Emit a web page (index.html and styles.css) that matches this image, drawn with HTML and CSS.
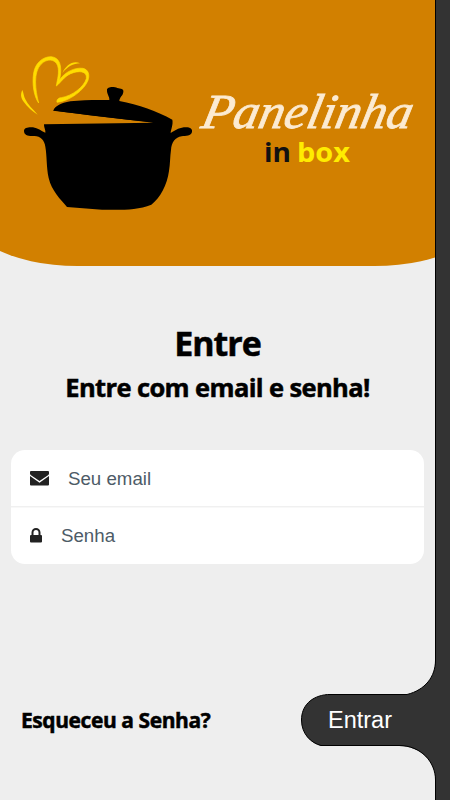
FILE: index.html
```html
<!DOCTYPE html>
<html lang="pt-BR">
<head>
  <meta charset="UTF-8" />
  <title>Panelinha in box</title>
  <meta name="viewport" content="width=device-width, initial-scale=1" />
  <link rel="stylesheet" href="styles.css">
</head>
<body>
  <div class="screen">
    <header>
      <svg class="pot" viewBox="0 0 600 540" aria-hidden="true">
        <path d="M132 253L460 248L160 212C164 199 182 189 211 184C249 179 295 180 328 180C329 170 320 162 321 150C320 139 343 139 352 144C362 147 372 146 370 156C369 167 359 171 358 183C416 193 471 214 517 239C520 254 513 267 512 279C528 269 540 262 558 262C571 262 578 268 576 276C574 288 557 287 545 289C526 292 514 307 513 330C510 349 511 371 507 393C501 435 481 473 454 494C410 511 362 510 306 509L201 501C182 478 155 453 146 414C139 381 141 348 136 320C134 300 119 286 100 288C86 289 72 286 72 273C72 263 85 261 99 262C114 264 123 273 136 278C137 269 132 265 132 253Z"/>
        <path d="M158 211C250 224 360 238 462 247L430 225L250 195Z"/>
        <g fill="#ffdc00">
          <path d="M116 189C101 168 96 129 101 99C105 71 127 50 153 50C181 52 187 81 179 119C197 94 226 82 248 85C265 88 270 104 264 121C254 149 209 184 171 187C169 179 176 173 184 173C217 167 251 142 259 116C263 92 235 91 212 101C191 111 184 126 169 138C172 118 179 98 173 77C166 57 141 54 123 73C99 97 106 151 116 189Z" stroke="#ffdc00" stroke-width="2"/>
          <path d="M67 150C61 163 62 173 71 185C82 201 97 214 113 224C98 207 84 195 76 178C71 168 71 159 67 150Z"/>
          <path d="M187 99C197 76 220 60 240 70C220 70 201 81 187 99Z"/>
        </g>
      </svg>
      <svg class="brand" viewBox="0 0 240 100">
        <text class="brand-name" x="20" y="48" textLength="210" lengthAdjust="spacingAndGlyphs" transform="skewX(-12)">Panelinha</text>
        <text class="brand-in" x="74" y="82" textLength="27" lengthAdjust="spacingAndGlyphs">in</text>
        <text class="brand-box" x="107" y="82" textLength="53" lengthAdjust="spacingAndGlyphs">box</text>
      </svg>
    </header>

    <main>
      <h1>Entre</h1>
      <h2>Entre com email e senha!</h2>
      <form class="fields">
        <label class="field">
          <svg width="19" height="15" viewBox="0 0 19 15">
            <path d="M1 0H18Q19 0 19 1V2.500Q19 3.500 18 4.200L9.500 10L1 4.200Q0 3.500 0 2.500V1Q0 0 1 0ZM0 5L9.500 11.700L19 5V13.500Q19 14.500 18 14.500H1Q0 14.500 0 13.500Z"/>
          </svg>
          <input type="email" placeholder="Seu email" />
        </label>
        <label class="field">
          <svg width="12" height="15" viewBox="0 0 12 15">
            <path d="M1.500 7V4.500A4.500 4.500 0 0 1 10.500 4.500V7H11Q12 7 12 8V13.500Q12 14.500 11 14.500H1Q0 14.500 0 13.500V8Q0 7 1 7ZM3.500 7H8.500V4.500A2.500 2.500 0 0 0 3.500 4.500Z"/>
          </svg>
          <input type="password" placeholder="Senha" />
        </label>
      </form>
    </main>

    <footer>
      <a class="forgot" href="#">Esqueceu a Senha?</a>
      <button class="enter" type="button">
        <svg class="enter-shape" width="149" height="130" viewBox="0 0 149 130" aria-hidden="true">
          <path class="shape-fill" d="M134.500 0V10C134.500 27 124 40 106 44.500H26.500C10 46 .500 56 .500 70C.500 84 10 93 20 96H98C120 96 134.500 112 134.500 130H149V0Z"/>
          <path class="shape-edge" d="M134.500 0V10C134.500 27 124 40 106 44.500H26.500C10 46 .500 56 .500 70C.500 84 10 93 20 95.500H98C120 95.500 134.500 112 134.500 130"/>
        </svg>
        <span>Entrar</span>
      </button>
    </footer>
  </div>
  <aside></aside>
</body>
</html>
```

FILE: styles.css
```css
* {
  box-sizing: border-box;
}
body {
  margin: 0;
  height: 800px;
  display: flex;
  overflow: hidden;
  background: #eee;
  color: #000;
  font-family: "Liberation Sans", Arial, sans-serif;
}
.screen {
  width: 435px;
  display: flex;
  flex-direction: column;
}
aside {
  width: 15px;
  background: #333;
  border-left: 1px solid #000;
}
header {
  position: relative;
  height: 266px;
  padding-top: 40px;
  display: flex;
  overflow: hidden;
}
/* wider than the screen, so only part of each rounded corner shows */
header::before {
  content: "";
  position: absolute;
  top: 0;
  bottom: 0;
  left: -43px;
  right: -60px;
  background: #d28000;
  border-radius: 0 0 120px 120px / 0 0 64px 64px;
}
.pot {
  position: relative;
  flex: none;
  width: 200px;
  height: 180px;
}
.brand {
  position: relative;
  flex: none;
  width: 240px;
  height: 100px;
  margin: 40px 0 0 -10px;
}
.brand-name {
  font: italic 49px "Liberation Serif", serif;
  fill: #fcebd2;
  stroke: #fcebd2;
  stroke-width: 0.8px;
}
.brand-in,
.brand-box {
  font: 700 27px "Open Sans", sans-serif;
}
.brand-in {
  fill: #111;
}
.brand-box {
  fill: #ffec00;
}
main {
  padding: 55px 11px 0;
  text-align: center;
}
h1,
h2,
.forgot {
  font-family: "Open Sans", sans-serif;
  font-weight: 700;
  -webkit-text-stroke: 0.5px #000;
}
h1 {
  margin: 0;
  font-size: 34px;
  line-height: 44px;
  letter-spacing: -1px;
}
h2 {
  margin: 0;
  font-size: 25.5px;
  line-height: 44px;
  letter-spacing: -0.62px;
}
.fields {
  margin-top: 41px;
  background: #fff;
  border-radius: 14px;
  overflow: hidden;
}
.field {
  display: flex;
  align-items: center;
  height: 57px;
  padding: 0 19px;
}
.field + .field {
  box-shadow: 0 -1px #f0f0f0, inset 0 1px #f8f8f8;
}
.field svg {
  flex: none;
  fill: #222;
}
.field input {
  flex: 1;
  margin-left: 19px;
  padding: 0;
  border: 0;
  outline: 0;
  background: none;
  font: 18.7px "Liberation Sans", Arial, sans-serif;
}
.field input::placeholder {
  color: #4d5b67;
  opacity: 1;
}
footer {
  display: flex;
  align-items: center;
  justify-content: space-between;
  height: 52px;
  margin-top: 130px;
  padding-left: 21px;
}
.forgot {
  color: #000;
  font-size: 21px;
  letter-spacing: -0.43px;
  text-decoration: none;
  white-space: nowrap;
}
.enter {
  position: relative;
  width: 134px;
  height: 52px;
  padding: 0 0 0 27px;
  border: 0;
  background: none;
  color: #fff;
  font: 23.5px "Liberation Sans", Arial, sans-serif;
  text-align: left;
}
.enter span {
  position: relative;
}
.enter-shape {
  position: absolute;
  top: -44px;
  left: 0;
}
.shape-fill {
  fill: #333;
}
.shape-edge {
  fill: none;
  stroke: #000;
}
```
